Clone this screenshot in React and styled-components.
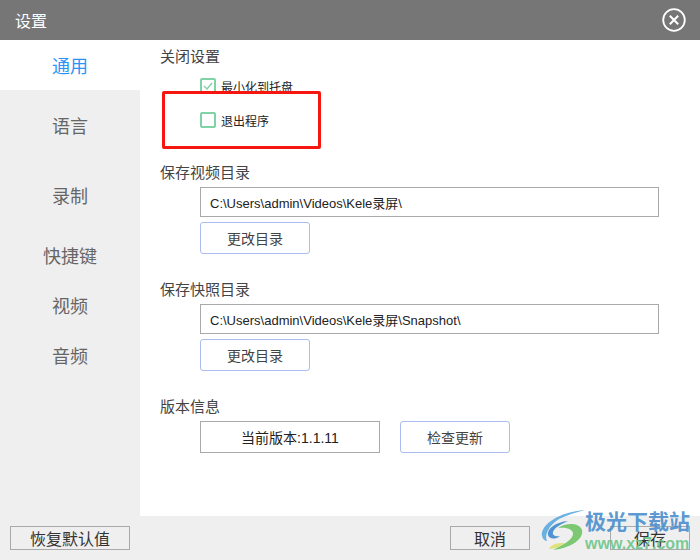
import React from 'react';
import styled, { createGlobalStyle } from 'styled-components';

const GlobalStyle = createGlobalStyle`
  *, *::before, *::after {
    box-sizing: border-box;
  }
  html, body {
    margin: 0;
    padding: 0;
    background: #fff;
  }
  body {
    font-family: "Liberation Sans", "Noto Sans CJK SC", sans-serif;
  }
`;

const Win = styled.div`
  position: relative;
  width: 700px;
  height: 560px;
  overflow: hidden;
  display: flex;
  flex-direction: column;
`;

const TitleBar = styled.div`
  height: 40px;
  flex: none;
  background: #767676;
  color: #fff;
  font-size: 16px;
  display: flex;
  align-items: center;
  justify-content: space-between;
  padding: 0 14px 0 15px;
`;

const CloseBtn = styled.svg`
  width: 24px;
  height: 24px;
  display: block;
`;

const Body = styled.div`
  flex: 1;
  display: flex;
  min-height: 0;
`;

const Sidebar = styled.div`
  width: 140px;
  flex: none;
  background: #efefef;
`;

const NavItem = styled.div`
  height: ${(p) => p.$h}px;
  display: flex;
  align-items: center;
  justify-content: center;
  font-size: 18px;
  color: ${(p) => (p.$active ? '#2b93f5' : '#666')};
  background: ${(p) => (p.$active ? '#fff' : 'transparent')};
`;

const Main = styled.div`
  flex: 1;
  padding: 6px 41px 0 20px;
  background: #fff;
`;

const Section = styled.div`
  margin-bottom: ${(p) => p.$mb || 0}px;
`;

const Heading = styled.div`
  font-size: 15px;
  line-height: 22px;
  color: #444;
`;

const Indented = styled.div`
  padding-left: 40px;
`;

const CheckRow = styled.div`
  display: flex;
  align-items: center;
  gap: 5px;
  height: 16px;
  font-size: 12px;
  color: #222;
  margin-top: ${(p) => p.$mt}px;
`;

const Box = styled.span`
  width: 16px;
  height: 16px;
  border: 2px solid #7fd3a6;
  border-radius: 2px;
  display: flex;
  align-items: center;
  justify-content: center;
  flex: none;
`;

const PathInput = styled.div`
  height: 30px;
  border: 1px solid #a9a9a9;
  display: flex;
  align-items: center;
  padding-left: 9px;
  font-size: 13px;
  color: #222;
  margin-top: 3px;
`;

const BlueBtn = styled.div`
  width: 110px;
  height: 32px;
  border: 1px solid #a9bdf0;
  border-radius: 3px;
  display: flex;
  align-items: center;
  justify-content: center;
  font-size: 14px;
  color: #444;
  margin-top: ${(p) => p.$mt || 0}px;
`;

const VersionRow = styled.div`
  display: flex;
  gap: 20px;
  margin-top: 3px;
`;

const VersionBox = styled.div`
  width: 180px;
  height: 32px;
  border: 1px solid #a9a9a9;
  display: flex;
  align-items: center;
  justify-content: center;
  font-size: 14px;
  color: #222;
`;

const Footer = styled.div`
  height: 44px;
  flex: none;
  background: #efefef;
  display: flex;
  align-items: flex-start;
  padding: 10px 10px 0;
`;

const FootBtn = styled.div`
  width: ${(p) => p.$w}px;
  height: 24px;
  border: 1px solid #a9a9a9;
  display: flex;
  align-items: center;
  justify-content: center;
  font-size: 16px;
  color: #333;
  margin-left: ${(p) => p.$ml || 0}px;
`;

const RedFrame = styled.div`
  position: absolute;
  left: 162px;
  top: 91px;
  width: 159px;
  height: 58px;
  border: 3px solid #f5160f;
  border-radius: 2px;
  background: #fff;
  z-index: 1;
`;

const OverRow = styled(CheckRow)`
  position: absolute;
  left: 200px;
  top: 112px;
  margin: 0;
  z-index: 2;
`;

const Watermark = styled.div`
  position: absolute;
  left: 541px;
  top: 510px;
  width: 159px;
  height: 42px;
  z-index: 3;
  pointer-events: none;
`;

const MarkLogo = styled.svg`
  position: absolute;
  left: 0;
  top: 0;
  width: 44px;
  height: 40px;
`;

const MarkTitle = styled.div`
  position: absolute;
  left: 44px;
  top: -1px;
  font-size: 21px;
  line-height: 26px;
  font-weight: 700;
  white-space: nowrap;
  color: rgba(70, 140, 205, 0.9);
`;

const MarkUrl = styled.div`
  position: absolute;
  left: 44px;
  top: 25px;
  font-size: 16px;
  line-height: 18px;
  font-weight: 700;
  white-space: nowrap;
  color: rgba(100, 195, 130, 0.85);
`;

const navItems = [
  { label: '通用', h: 50, active: true },
  { label: '语言', h: 70 },
  { label: '录制', h: 70 },
  { label: '快捷键', h: 50 },
  { label: '视频', h: 50 },
  { label: '音频', h: 50 },
];

const Tick = () => (
  <svg width="10" height="8" viewBox="0 0 10 8">
    <path d="M1 4l3 3 5-6" fill="none" stroke="#7fd3a6" strokeWidth="1.4" />
  </svg>
);

export default function App() {
  return (
    <Win>
      <GlobalStyle />
      <TitleBar>
        <span>设置</span>
        <CloseBtn viewBox="0 0 24 24">
          <circle cx="12" cy="12" r="10.8" fill="none" stroke="#fff" strokeWidth="1.8" />
          <path d="M7.8 7.8l8.4 8.4M16.2 7.8l-8.4 8.4" stroke="#fff" strokeWidth="2" />
        </CloseBtn>
      </TitleBar>
      <Body>
        <Sidebar>
          {navItems.map((n) => (
            <NavItem key={n.label} $h={n.h} $active={n.active}>
              {n.label}
            </NavItem>
          ))}
        </Sidebar>
        <Main>
          <Section $mb={68}>
            <Heading>关闭设置</Heading>
            <Indented>
              <CheckRow $mt={10}>
                <Box>
                  <Tick />
                </Box>
                最小化到托盘
              </CheckRow>
            </Indented>
          </Section>
          <Section $mb={25}>
            <Heading>保存视频目录</Heading>
            <Indented>
              <PathInput>C:\Users\admin\Videos\Kele录屏\</PathInput>
              <BlueBtn $mt={5}>更改目录</BlueBtn>
            </Indented>
          </Section>
          <Section $mb={25}>
            <Heading>保存快照目录</Heading>
            <Indented>
              <PathInput>C:\Users\admin\Videos\Kele录屏\Snapshot\</PathInput>
              <BlueBtn $mt={5}>更改目录</BlueBtn>
            </Indented>
          </Section>
          <Section>
            <Heading>版本信息</Heading>
            <Indented>
              <VersionRow>
                <VersionBox>当前版本:1.1.11</VersionBox>
                <BlueBtn>检查更新</BlueBtn>
              </VersionRow>
            </Indented>
          </Section>
        </Main>
      </Body>
      <Footer>
        <FootBtn $w={120}>恢复默认值</FootBtn>
        <FootBtn $w={80} $ml={320}>取消</FootBtn>
        <FootBtn $w={80} $ml={80}>保存</FootBtn>
      </Footer>

      <RedFrame />
      <OverRow>
        <Box />
        退出程序
      </OverRow>

      <Watermark>
        <MarkLogo viewBox="0 0 44 40">
          <path d="M44 0C28 1 6 8 1 22C0 27 3 31 6 31C3 25 8 15 18 9C26 5 36 2 44 0z" fill="#6ab0e0" />
          <path d="M27 11C16 12 6 18 7 25C8 29 14 30 19 26C14 27 11 25 12 22C13 18 20 14 27 11z" fill="#4f93d2" />
          <path d="M17 18C24 13 38 12 41 20C43 29 30 38 12 40C22 35 33 29 32 23C31 18 23 17 17 18z" fill="#7cc873" />
          <path d="M8 39C10 34 16 33 24 33C20 36 14 39 8 39z" fill="#dfe27a" />
        </MarkLogo>
        <MarkTitle>极光下载站</MarkTitle>
        <MarkUrl>www.xz7.com</MarkUrl>
      </Watermark>
    </Win>
  );
}
